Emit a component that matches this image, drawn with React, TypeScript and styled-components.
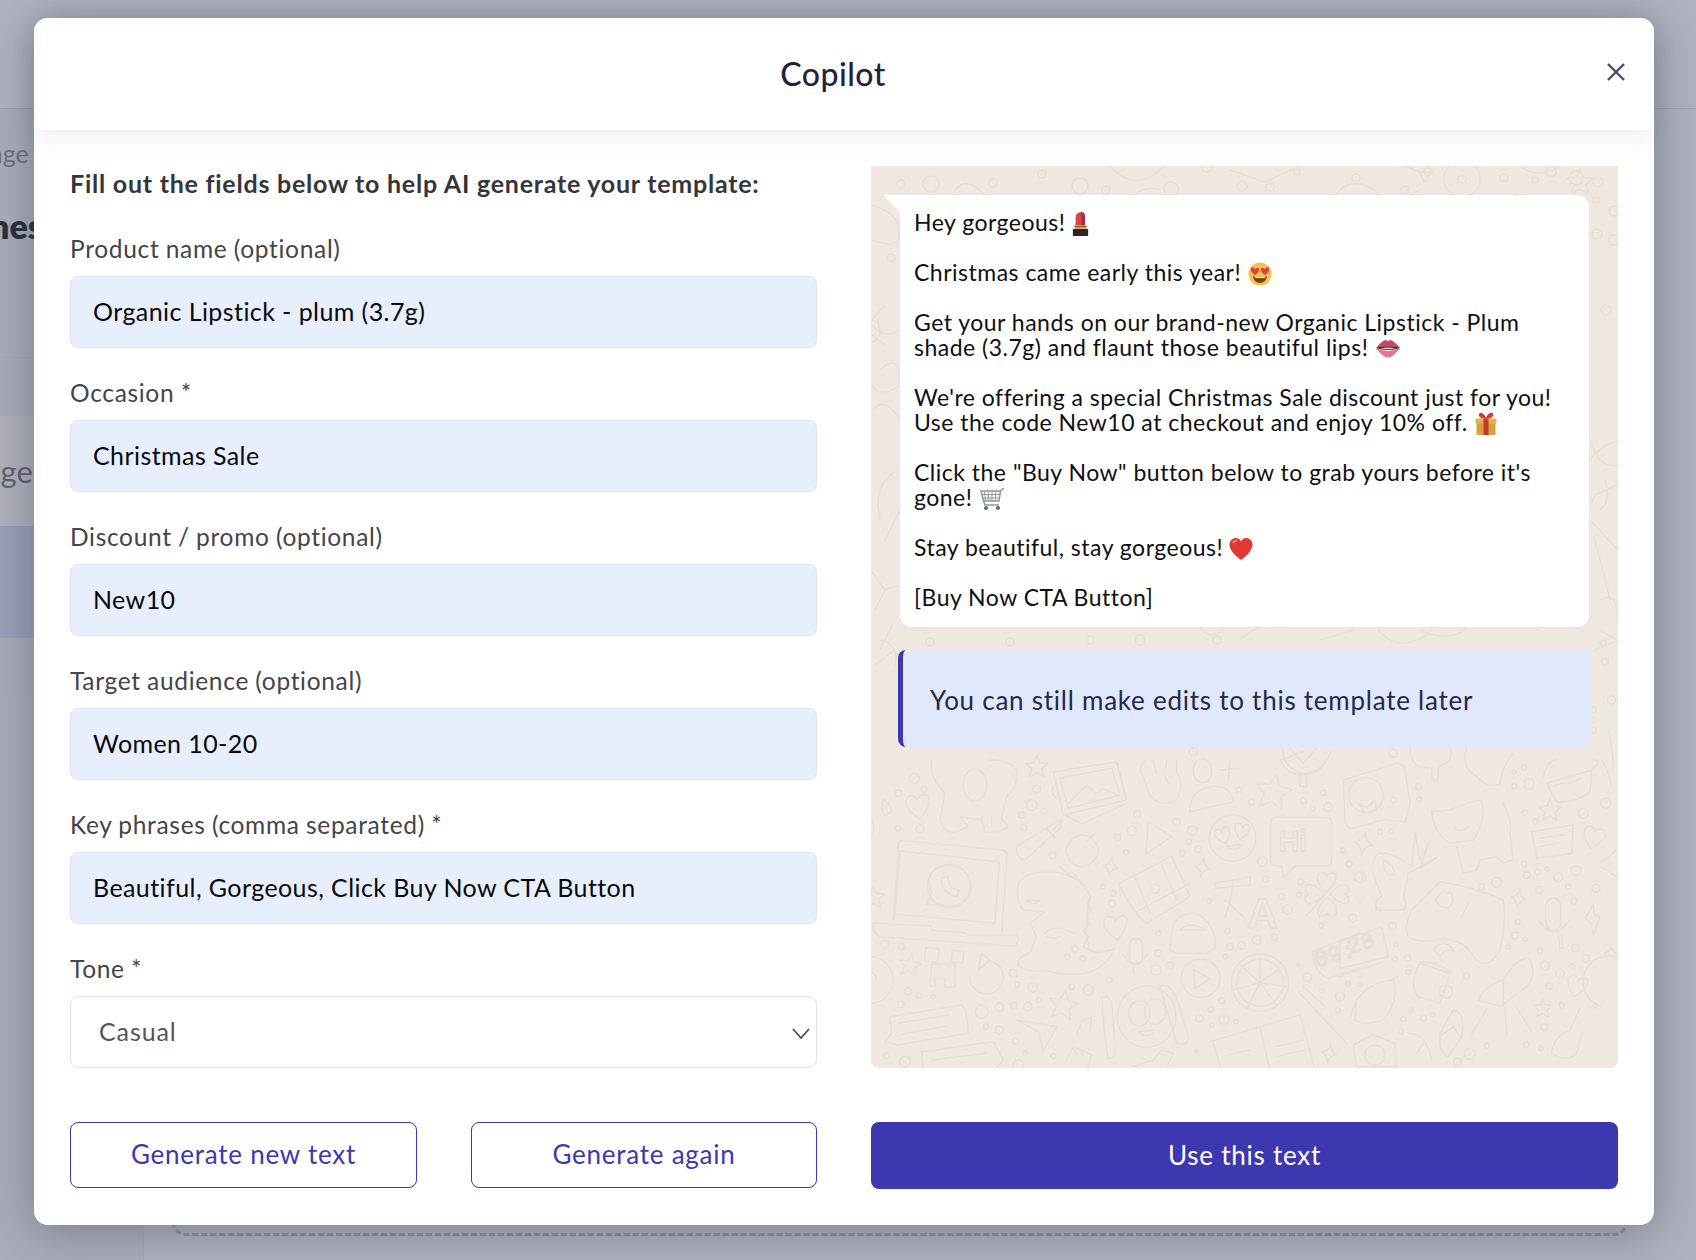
import React from "react";
import styled, { createGlobalStyle } from "styled-components";

const FONT = `Lato, "Noto Sans", Arial, sans-serif`;
const INDIGO = "#3d38b0";

const Global = createGlobalStyle`
  html, body { margin: 0; padding: 0; background: #adb2be; }
  * { box-sizing: border-box; }
  body { font-family: ${FONT}; }
`;

const Page = styled.div`
  position: relative; width: 1696px; height: 1260px; overflow: hidden;
  display: flex; flex-direction: column; background: #adb2be;
`;
const TopBar = styled.div`height: 109px; flex: none; background: #aeb3bf; border-bottom: 1px solid #9fa3ae;`;
const PageBody = styled.div`flex: 1; display: flex; min-height: 0;`;
const Side = styled.div`
  width: 144px; flex: none; display: flex; flex-direction: column; overflow: hidden;
  background: #a9adb9; border-right: 1px solid #a4a8b4;
`;
const SideCrumb = styled.div`
  height: 92px; padding-top: 28px; margin-left: -59px; white-space: nowrap;
  font-size: 25px; color: #6d717c; line-height: 32px;
`;
const SideTitle = styled.div`
  height: 157px; padding-top: 3px; margin-left: -10px; white-space: nowrap;
  font-size: 34px; font-weight: 800; color: #2b3040; line-height: 44px;
  border-bottom: 1px solid #a0a4af;
`;
const SideRow = styled.div<{ $tone: string }>`
  height: ${p => (p.$tone === "active" ? 112 : p.$tone === "item" ? 110 : 58)}px;
  flex: none; margin-left: ${p => (p.$tone === "item" ? -33 : 0)}px;
  background: ${p => (p.$tone === "active" ? "#9a9fb9" : p.$tone === "item" ? "#aeb1bc" : "#a8abb7")};
  display: flex; align-items: center; font-size: 31px; color: #5f6370;
`;
const Content = styled.div`flex: 1; display: flex; flex-direction: column; justify-content: flex-end; padding: 0 68px 24px 28px;`;
const Dashed = styled.div`height: 200px; border: 3px dashed #8d919c; border-radius: 14px;`;

const Modal = styled.div`
  position: absolute; left: 34px; top: 18px; width: 1620px; height: 1207px;
  background: #fff; border-radius: 14px; display: flex; flex-direction: column;
  box-shadow: 0 6px 44px rgba(40, 44, 60, .38);
`;
const Header = styled.header`
  position: relative; height: 112px; flex: none; background: #fff; border-radius: 14px 14px 0 0;
  display: flex; align-items: center; justify-content: center;
  box-shadow: 0 4px 26px rgba(30, 30, 60, .09);
`;
const Title = styled.h1`
  margin: 0; font-size: 32px; font-weight: 500; color: #22223f; letter-spacing: .5px;
  position: relative; left: -11px; top: -1px;
`;
const Close = styled.button`
  position: absolute; right: 26px; top: 42px; width: 24px; height: 24px; padding: 0;
  border: 0; background: none; color: #4a4a63; display: flex; align-items: center; justify-content: center;
`;
const Body = styled.div`
  flex: 1; display: grid; grid-template-columns: 747px 747px; column-gap: 54px; row-gap: 54px;
  grid-template-rows: 902px 67px; padding: 36px;
`;
const Form = styled.form`display: flex; flex-direction: column; margin: 0;`;
const Heading = styled.h2`
  margin: 0 0 32px; font-size: 25px; line-height: 34px; height: 36px; font-weight: 700; color: #35353c; letter-spacing: .76px; white-space: nowrap;
`;
const Field = styled.div`display: flex; flex-direction: column; margin-bottom: 30px; position: relative; &:last-child { margin-bottom: 0; }`;
const Label = styled.label`
  height: 30px; line-height: 30px; margin-bottom: 12px; font-size: 24.5px; color: #44444c; letter-spacing: .68px; word-spacing: -.6px; white-space: nowrap;
`;
const Input = styled.input`
  height: 72px; width: 100%; padding: 0 22px 2px; font: 400 25px ${FONT}; color: #08080f; letter-spacing: .42px;
  background: #e8effc; border: 1px solid #dee4ef; border-radius: 8px; outline: none;
`;
const Select = styled.select`
  height: 72px; width: 100%; padding: 0 28px 2px; font: 400 25px ${FONT}; color: #55555c; letter-spacing: .9px;
  background: #fff; border: 1px solid #e2e2e4; border-radius: 8px; outline: none; appearance: none;
`;
const Chevron = styled.svg`position: absolute; right: 6px; bottom: 27px; width: 20px; height: 14px;`;

const Wallpaper = styled.section`
  position: relative; overflow: hidden; height: 902px; background: #eee8df; border-radius: 0 0 8px 8px;
  padding: 29px 29px 0; display: flex; flex-direction: column;
`;
const Doodles = styled.svg`position: absolute; left: 0; top: 0; width: 747px; height: 902px;`;
const Bubble = styled.div`
  position: relative; background: #fff; border-radius: 0 12px 12px 12px; padding: 15px 15px 17px 14px;
  font-size: 23px; line-height: 25px; color: #0f0f12; letter-spacing: .49px; white-space: nowrap; height: 432px;
  &::before {
    content: ""; position: absolute; left: -17px; top: 0; width: 0; height: 0;
    border-top: 17px solid #fff; border-left: 17px solid transparent;
  }
`;
const Para = styled.p`margin: 0 0 25px; &:last-child { margin: 0; }`;
const Emoji = styled.svg<{ $w?: number }>`
  width: ${p => p.$w ?? 24}px; height: 24px; vertical-align: 1px; margin: -6px 0 -6px 0;
`;
const Notice = styled.div`
  position: relative; margin: 23px -3px 0 -2px; height: 97px; display: flex; align-items: center;
  padding: 2px 0 0 27px; background: #e0e9fb; border-left: 5px solid ${INDIGO}; border-radius: 8px;
  font-size: 26px; color: #28284a; letter-spacing: .75px; white-space: nowrap;
`;
const ButtonPair = styled.div`display: grid; grid-template-columns: 347px 346px; column-gap: 54px;`;
const Outline = styled.button`
  height: 66px; background: #fff; border: 1.5px solid ${INDIGO}; border-radius: 8px; color: ${INDIGO};
  font: 400 26px ${FONT}; letter-spacing: .75px; padding: 0 0 2px;
`;
const Primary = styled.button`
  height: 67px; background: ${INDIGO}; border: 0; border-radius: 8px; color: #fff;
  font: 400 26px ${FONT}; letter-spacing: .75px; padding: 0 0 2px;
`;

/* Wallpaper helpers ------------------------------------------------------ */
const HEART = "M0 9C-14-3-8-11-3-9-1-8 0-6 0-5 0-6 2-9 5-9 9-10 13-3 0 9Z";
const STAR = "M0-11 3-4 11-3 5 2 7 10 0 6-7 10-5 2-11-3-3-4Z";
const SPARK = "M0-11Q1-2 9 0 1 2 0 11-1 2-9 0-1-2 0-11Z";
type S = [number, number, number?, number?];
const Shape = ({ d, v }: { d: string; v: S }) => (
  <path d={d} transform={`translate(${v[0]} ${v[1]}) rotate(${v[3] ?? 0}) scale(${v[2] ?? 3})`} vectorEffect="non-scaling-stroke" strokeWidth="1.5" />
);
const Heart = ({ v }: { v: S }) => <Shape d={HEART} v={v} />;
const Star = ({ v }: { v: S }) => <Shape d={STAR} v={v} />;
const Spark = ({ v }: { v: S }) => <Shape d={SPARK} v={v} />;
const dots = (list: number[][]) => list.map(([x, y, r], i) => <circle key={i} cx={x} cy={y} r={r} />);
const paths = (list: string[]) => list.map((d, i) => <path key={i} d={d} />);

const G1 = () => (
  <g transform="translate(-11 594) scale(.3333)" strokeWidth="4.5">
    {paths([
      "M100 480L115 255Q118 240 132 242L428 270Q442 272 441 288L425 515M120 272L418 305 405 490 105 462Z",
      "M40 490L210 498 215 510 315 518 320 525 470 525Q482 540 465 558L60 530Q35 515 40 490Z",
      "M198 435L215 400Q195 350 225 330 265 300 310 330 345 365 325 410 285 455 240 432Z",
      "M245 355Q240 395 290 410L298 392 278 385 268 370 262 350Z",
      "M215 0Q205 50 255 100L240 180Q255 225 290 215L325 200 300 170 365 180 375 215Q420 220 445 200L425 175 440 110Q480 70 470 30Q450 0 390 0M395 170V195",
      "M580 35L770 5 800 120 610 165ZM600 55L755 25 780 105 625 145ZM625 130L680 75 710 100 730 85 775 105M615 165L665 192 800 130M580 80Q570 100 590 115",
      "M855 0Q830 30 850 50L870 105Q900 145 950 120 975 70 950 40V0M880 0L890 40M920 0L915 40Q915 60 930 70",
      "M990 155Q990 90 1050 80 1110 70 1122 125ZM1110 0L1105 60M1080 30L1140 25",
      "M1262 0Q1280 45 1330 45 1390 40 1395 0M1320 45V80H1340V45",
      "M470 260L590 185 605 180 600 205 495 300Q465 295 470 260ZM560 205L585 235M600 185L580 210",
      "M660 225Q620 240 618 275 630 320 665 320 715 310 715 265 700 225 660 225ZM680 245Q690 230 705 220",
      "M865 185L935 230 858 283Z",
      "M1100 258Q1125 280 1148 255Z",
      "M1250 172H1400Q1415 172 1415 190V300Q1415 318 1400 318H1305L1270 352 1265 318H1250Q1232 318 1232 300V190Q1232 172 1250 172Z",
      "M585 335Q500 330 475 370 465 420 490 450L555 455 510 490 530 530 510 580Q470 590 475 615 500 640 560 630 600 650 680 640 740 620 765 565 720 585 690 570 670 530 690 410 670 350 585 335Z",
      "M600 320L620 340H640L660 360 675 380 692 410 680 430 695 450 680 470 690 490 670 510 685 530 670 560 710 580 750 570",
      "M497 420Q520 440 540 422ZM555 520Q590 490 640 520M560 530Q580 540 600 530",
      "M775 372L935 288 990 410 860 490Q835 480 775 372ZM820 340L870 460M905 315L950 420M830 455L990 370",
      "M935 520Q940 465 995 460 1040 460 1065 530V565L1040 580H950L930 570ZM960 510Q990 480 1035 510Z",
      "M1065 370L1170 350V375L1065 385ZM1120 360Q1115 420 1095 470M1095 420L1150 470",
      "M1340 465L1400 400",
      "M790 585Q825 640 860 585M820 620V640",
      "M1355 575L1500 520M1358 580Q1365 640 1405 655L1500 625",
      "M1000 630L1050 655 1005 685Z",
      "M1200 668V590M1200 668L1265 620M1200 668L1280 680M1200 668L1250 735M1200 668L1160 745M1200 668L1120 690M1200 668L1140 615",
      "M725 715Q745 700 755 730L765 860Q770 900 745 895 735 850 725 715ZM900 680Q930 660 955 730L985 830Q985 860 950 850 930 780 900 680Z",
      "M90 770L305 735Q320 740 325 820L110 855 75 845 95 820ZM115 790L265 765M125 822L262 798",
      "M185 875L400 845 430 900 405 930H190ZM215 900L380 880",
      "M470 780L590 800 550 875 535 815Z",
      "M650 825L665 785 695 770 690 815",
      "M1050 845L1320 765 1365 930M1200 805L1230 930M1060 850L1085 930M1105 885L1170 870M1250 860L1330 840M1250 890L1335 870",
      "M1315 695L1460 850M1330 680L1390 735",
      "M330 650A50 50 0 1 0 385 602M355 630L365 580 390 600Z",
      "M30 590A70 70 0 0 1 30 730M0 640A30 30 0 0 1 50 660",
      "M620 900L640 860 695 885 680 930M640 865L650 880M660 870L668 885",
      "M820 920L880 900 905 870 940 880 920 920",
      "M35 180Q50 210 35 225M70 115Q60 170 80 165 110 155 70 115Z",
    ])}
    <rect x="195" y="565" width="40" height="40" transform="rotate(6 215 585)" />
    <rect x="275" y="572" width="35" height="35" transform="rotate(6 292 590)" />
    <path d="M215 612H285V680H255V655H225V678H210Z" />
    <rect x="808" y="535" width="40" height="78" rx="20" />
    <ellipse cx="345" cy="75" rx="35" ry="48" />
    <ellipse cx="1027" cy="32" rx="28" ry="36" />
    <ellipse cx="860" cy="770" rx="88" ry="92" />
    <ellipse cx="838" cy="760" rx="32" ry="38" />
    <ellipse cx="885" cy="755" rx="32" ry="38" />
    <path d="M835 815Q860 840 885 810Z" />
    <circle cx="267" cy="378" r="65" />
    <circle cx="1118" cy="234" r="70" />
    <circle cx="1022" cy="655" r="58" />
    <circle cx="1200" cy="668" r="86" />
    <circle cx="1200" cy="668" r="70" />
    <circle cx="885" cy="385" r="14" />
    <text x="1256" y="272" fontSize="86" fontWeight="700" fontFamily="Liberation Sans" fill="none">Hi</text>
    <text x="1160" y="505" fontSize="130" fontWeight="700" fontFamily="Liberation Sans" fill="none">A</text>
    <text x="1370" y="622" fontSize="70" fontFamily="Liberation Mono" fill="none" transform="rotate(-16 1370 622)">09:</text>
    <Heart v={[175, 142, 4, -8]} /><Heart v={[768, 505, 4, -6]} /><Heart v={[1090, 228, 2.6, -20]} /><Heart v={[1145, 215, 2.6, 10]} />
    <Heart v={[1400, 368, 3.2]} /><Heart v={[1438, 402, 3.2, 90]} /><Heart v={[1402, 440, 3.2, 180]} /><Heart v={[1365, 402, 3.2, -90]} />
    <Star v={[530, 20, 3]} /><Star v={[1240, 95, 5, 10]} /><Star v={[150, 615, 3, 10]} /><Star v={[610, 735, 4, 10]} /><Star v={[40, 412, 3]} />
    <Spark v={[752, 320, 2.6, 10]} /><Spark v={[1027, 322, 2.6, 10]} /><Spark v={[1407, 880, 2.6, 10]} />
    {dots([[162,55,15],[115,100,10],[192,88,9],[515,135,16],[485,165,9],[552,155,9],[530,88,12],[490,203,9],[114,205,8],[180,207,12],[578,285,10],[773,232,10],[815,213,14],[832,163,10],[950,186,11],[997,212,15],[987,244,8],[1015,268,10],[967,280,9],[798,278,7],[1207,305,14],[1137,90,8],[1175,126,9],[1330,122,9],[1358,145,7],[1405,142,13],[1390,98,8],[730,380,7],[760,400,8],[757,430,10],[1047,423,7],[1217,357,9],[1265,410,9],[1317,405,8],[1283,448,14],[1322,365,9],[1103,513,8],[1110,560,10],[1145,556,11],[1190,540,13],[1244,532,9],[1096,590,7],[895,520,7],[895,580,10],[888,630,16],[930,617,11],[460,640,12],[472,673,7],[518,682,14],[635,680,8],[685,690,15],[622,590,8],[668,596,8],[645,567,9],[748,660,8],[144,694,11],[177,707,8],[220,710,6],[122,733,10],[365,755,20],[418,742,13],[462,737,10],[503,740,13],[537,720,7],[378,800,8],[418,810,12],[1018,775,11],[1052,748,8],[1092,778,15],[1128,785,6],[1085,722,8],[1055,795,6],[75,552,12],[125,560,9],[467,843,9],[497,880,6],[580,888,7],[1009,872,5],[1440,710,13],[1433,750,7],[1385,692,6],[1342,652,13],[1314,617,5],[1384,497,7],[1465,672,7],[1467,312,9],[1450,270,7],[1495,350,14],[80,887,8],[135,905,16],[475,915,15]])}
  </g>
);

const G2 = () => (
  <g transform="translate(469 594) scale(.3333)" strokeWidth="4.5">
    {paths([
      "M10 60L170 10Q190 10 195 30L210 130 195 185 130 180 40 205Q20 205 15 185ZM55 130Q80 155 105 120L110 150 75 160Z",
      "M275 155L330 150 395 125 425 120Q440 180 400 240L330 250Q280 220 275 155ZM350 260L370 340 410 330 420 300 470 290 490 310 520 300 510 220Q515 170 490 130M345 205Q365 220 385 200",
      "M650 125L620 70 755 30 750 95Q710 130 650 125ZM610 50Q620 0 650 0M755 30Q790 0 760 0M640 80L665 70 690 70 720 55",
      "M575 215L700 195 695 280 590 295ZM600 235L670 225M600 260L655 250",
      "M115 280Q90 300 105 360L125 410Q100 420 110 450H190Q205 430 190 415L205 340 295 290 240 325 270 240 240 300 225 220 215 320 170 290 140 280ZM130 300Q130 350 160 345 170 320 130 300Z",
      "M215 450L300 365Q400 380 490 420 500 480 480 570 440 640 400 590 370 530 290 540 240 550 205 530 190 500 215 450ZM305 395L335 400 340 425 325 445 300 440 285 420ZM365 470L385 430M280 570Q310 530 345 575 320 560 300 590Z",
      "M595 480Q640 550 690 480M655 525L660 565H668L665 525",
      "M760 435L735 475 755 490 760 525 780 470 762 462Z",
      "M0 545L125 500 145 590 0 625ZM0 650L128 605",
      "M240 610L330 640 300 730 235 710Q205 670 240 610ZM240 605Q280 600 330 635",
      "M415 720Q430 680 490 660 530 590 570 595 590 650 560 680L480 740ZM490 660V740M440 745L395 825M495 745L500 825M525 735L575 815",
      "M50 720Q90 665 160 660 180 720 130 780 70 800 45 780ZM30 770L50 720M150 660L175 650",
      "M340 750Q380 760 365 830L325 890Q295 880 300 820ZM305 825L340 800 360 830M205 820Q260 820 275 900M230 880L250 850",
      "M720 745L690 810Q640 830 635 880 680 910 710 880L725 820",
      "M40 855L100 825 165 850 170 920H50Z",
      "M785 740A60 60 0 0 1 830 590M795 580L812 565 830 580",
      "M780 310L830 270M780 320L830 350",
    ])}
    <rect x="618" y="415" width="44" height="95" rx="22" />
    <circle cx="78" cy="105" r="52" />
    <circle cx="318" cy="695" r="20" />
    <circle cx="105" cy="885" r="30" />
    <text x="28" y="582" fontSize="70" fontFamily="Liberation Mono" fill="none" transform="rotate(-16 28 582)">28</text>
    <Heart v={[760, 235, 3.6, 14]} /><Heart v={[710, 680, 3.4, 14]} /><Star v={[630, 150, 3]} /><Star v={[608, 745, 2.6]} />
    <Spark v={[70, 250, 3.2, 10]} /><Spark v={[535, 415, 2.6, 10]} />
    {dots([[568,72,16],[552,22,8],[522,35,6],[522,78,8],[730,160,15],[555,157,8],[586,184,7],[797,130,15],[552,312,8],[560,345,10],[592,336,8],[622,328,6],[655,352,13],[708,332,15],[685,380,7],[768,385,12],[598,390,11],[702,424,9],[62,352,16],[60,426,6],[28,312,8],[10,272,7],[120,215,7],[155,215,7],[424,380,9],[470,367,15],[533,485,7],[525,527,10],[556,537,6],[505,560,6],[600,573,8],[707,564,12],[738,596,11],[660,640,13],[696,618,7],[615,617,13],[628,678,10],[765,738,6],[665,736,8],[613,802,11],[559,854,8],[602,864,7],[441,857,7],[389,882,16],[353,905,11],[38,474,12],[158,498,11],[168,553,6],[165,598,7],[203,595,9],[205,637,7],[380,648,9],[22,670,6],[60,672,7],[214,750,6],[250,773,9],[278,765,6],[190,778,7],[183,815,7],[238,118,7],[235,80,9]])}
  </g>
);

const G3 = () => (
  <g transform="translate(309 454) scale(.3333)" strokeWidth="4.5">
    {paths([
      "M310 380Q300 440 370 462 440 450 450 395M360 465V498H380V465M330 385L370 430 410 385M300 420L370 395",
      "M690 385Q690 430 720 440L755 445V480H775V445L810 420 815 385",
      "M860 385Q840 440 890 470 930 510 960 490 970 430 1000 400",
      "M1265 420Q1290 460 1295 500M1285 330Q1300 400 1300 440",
      "M60 25Q90 60 130 30M180 60Q250 0 300 20M420 60L520 30M720 30Q800 70 860 25M1070 30Q1130 -10 1200 25M590 20Q620 70 680 70 750 50 760 20",
      "M1260 30L1310 60",
    ])}
    {dots([[40,395,12],[640,400,12],[640,540,8],[1275,125,10],[1240,270,9],[1240,330,9],[1270,70,9],[1295,240,12]])}
  </g>
);

const G4 = () => (
  <g transform="translate(-871 -166)" strokeWidth="1.5">
    {paths([
      "M953 195Q962 172 985 195M1135 195Q1145 185 1160 190M1230 170L1265 182 1300 166M1110 166Q1135 195 1165 166",
      "M1335 195Q1355 172 1380 195M1410 195L1420 190M1405 166L1420 172H1430Q1425 190 1420 172M1520 166Q1540 180 1560 166",
      "M872 205Q905 215 898 240M872 240Q900 250 900 235M872 325Q885 340 900 330M885 305L872 320M870 345L880 335 878 320",
      "M872 335L885 345M880 370Q900 350 900 385 880 400 872 385M873 410Q885 395 900 420M900 470Q872 480 880 520M900 510L885 540",
      "M872 572L885 590 875 610M885 590L900 585M892 625L880 650",
      "M1590 440Q1600 470 1618 465M1590 460Q1602 445 1618 440M1618 485L1595 495 1590 505M1605 480Q1612 500 1600 510",
      "M1590 520L1618 550M1595 540L1610 600M1600 600Q1618 590 1618 620M1618 640L1595 650",
      "M895 650L875 665M880 640Q900 645 895 665",
    ])}
    {dots([[901,184,4],[931,184,8],[993,183,4],[1042,174,4],[1080,186,8],[1106,190,4],[1171,189,7],[1207,166,6],[1242,186,5],[1270,187,4],[1297,172,3],[1356,178,4],[1405,190,4],[1428,172,4],[1504,178,4],[1517,198,4],[1535,180,3],[1551,172,5],[1576,178,7],[1598,182,5],[1596,200,3],[1614,211,5],[1597,234,5],[1614,240,5],[1606,310,5],[891,258,4],[1580,690,4],[930,642,4],[1010,642,4],[1090,640,4],[1140,640,5],[1217,640,4]])}
    <circle cx="1462" cy="179" r="18" />
    <circle cx="1462" cy="179" r="4" />
    <Star v={[1580, 182, 1.2]} />
  </g>
);

/* Colour emoji ------------------------------------------------------------ */
const LipstickEmoji = () => (
  <Emoji viewBox="5 0 14 22" $w={17}>
    <path d="M7.5 12.5V5Q7.5 2 10 .8L13 0Q16 .5 16 4V12.5Z" fill="#d8434c" />
    <path d="M13 0Q15.5 .5 16 4V12.5H13Z" fill="#a82a35" />
    <rect x="6.5" y="12" width="11" height="3.5" fill="#d7a94b" />
    <rect x="5" y="15.5" width="14" height="6.5" rx=".6" fill="#2b2624" />
    <rect x="6.5" y="13" width="11" height=".8" fill="#6d4d1c" />
  </Emoji>
);
const HeartEyes = () => (
  <Emoji viewBox="0 0 24 24">
    <circle cx="12" cy="12" r="11.5" fill="#f6c24e" />
    <path d="M5 14Q12 16 19 14 18 21 12 21 6 21 5 14Z" fill="#7a4219" />
    <path d="M6.5 14.6Q12 16 17.5 14.6L17 16H7Z" fill="#fff" />
    <path d="M7 13C1 9 2.500 4.500 5.500 5.500 6.500 5.800 7 7 7.200 7.500 8 6 9.800 5 11 6.500 12 9 9 11.500 7 13Z" fill="#e03c46" />
    <path d="M17 13C23 9 21.500 4.500 18.500 5.500 17.500 5.800 17 7 16.800 7.500 16 6 14.200 5 13 6.500 12 9 15 11.500 17 13Z" fill="#e03c46" />
  </Emoji>
);
const LipsEmoji = () => (
  <Emoji viewBox="0 0 26 24" $w={26}>
    <path d="M1 11Q8 3 10.500 3 12 3 13 4.500 14 3 15.500 3 18 3 25 11Z" fill="#c7485f" />
    <path d="M1 11Q13 17 25 11 18 20.500 13 20.500 8 20.500 1 11Z" fill="#e6758c" />
    <path d="M1 11Q13 8.500 25 11 13 15 1 11Z" fill="#1f1a1c" />
    <path d="M5 11Q13 10 21 11 13 13.500 5 11Z" fill="#dfe1e2" />
  </Emoji>
);
const GiftEmoji = () => (
  <Emoji viewBox="0 0 24 24">
    <rect x="2.500" y="9" width="19" height="14" rx="1" fill="#d6a03c" />
    <rect x="1.500" y="6.500" width="21" height="5" rx="1" fill="#e3b349" />
    <rect x="9.500" y="6.500" width="5" height="16.500" fill="#c8362f" />
    <path d="M12 6.500C8 7 4 5 5 2 6-.5 10 1 12 5.500 14 1 18-.5 19 2 20 5 16 7 12 6.500Z" fill="#d33d35" />
  </Emoji>
);
const CartEmoji = () => (
  <Emoji viewBox="0 0 26 24" $w={26}>
    <g stroke="#8f969c" strokeWidth="1" fill="none">
      <path d="M25 1L21.500 4H2L4.500 14H20L21.500 4M4.500 14L6 18H20" strokeWidth="1.500" />
      <path d="M5 4L7 14M9 4L10 14M13 4V14M17 4L16 14M3 7.500H21M3.500 11H20.500" />
    </g>
    <circle cx="7" cy="21" r="2" fill="#5d6468" /><circle cx="19" cy="21" r="2" fill="#5d6468" />
  </Emoji>
);
const HeartEmoji = () => (
  <Emoji viewBox="0 0 24 24">
    <path d="M12 23C4 17 .5 12 .5 7.500 .5 3.500 3.500 1 7 1 9.300 1 11 2.500 12 4.500 13 2.500 14.700 1 17 1 20.500 1 23.500 3.500 23.500 7.500 23.500 12 20 17 12 23Z" fill="#df3b32" />
    <path d="M4 6Q5 3.500 8 3.500" stroke="#f3938b" strokeWidth="1.500" fill="none" />
  </Emoji>
);

const FIELDS = [
  ["Product name (optional)", "Organic Lipstick - plum (3.7g)"],
  ["Occasion *", "Christmas Sale"],
  ["Discount / promo (optional)", "New10"],
  ["Target audience (optional)", "Women 10-20"],
  ["Key phrases (comma separated) *", "Beautiful, Gorgeous, Click Buy Now CTA Button"],
];

export default function App() {
  return (
    <Page>
      <Global />
      <TopBar />
      <PageBody>
        <Side>
          <SideCrumb>Manage templates</SideCrumb>
          <SideTitle>nes</SideTitle>
          <SideRow $tone="plain" />
          <SideRow $tone="item">Page</SideRow>
          <SideRow $tone="active" />
          <SideRow $tone="plain" />
        </Side>
        <Content><Dashed /></Content>
      </PageBody>

      <Modal>
        <Header>
          <Title>Copilot</Title>
          <Close aria-label="Close">
            <svg width="18" height="18" viewBox="0 0 18 18" fill="none" stroke="currentColor" strokeWidth="2.400">
              <path d="M1 1L17 17M17 1L1 17" />
            </svg>
          </Close>
        </Header>
        <Body>
          <Form>
            <Heading>Fill out the fields below to help AI generate your template:</Heading>
            {FIELDS.map(([label, value]) => (
              <Field key={label}>
                <Label>{label}</Label>
                <Input readOnly value={value} />
              </Field>
            ))}
            <Field>
              <Label>Tone *</Label>
              <Select defaultValue="Casual"><option>Casual</option></Select>
              <Chevron viewBox="0 0 20 14" fill="none" stroke="#4c4c4c" strokeWidth="1.800"><path d="M2 2L10 11 18 2" /></Chevron>
            </Field>
          </Form>
          <Wallpaper>
            <Doodles viewBox="0 0 747 902" fill="none" stroke="#e4dfd5" strokeLinecap="round" strokeLinejoin="round">
              <G1 /><G2 /><G3 /><G4 />
            </Doodles>
            <Bubble>
              <Para>Hey gorgeous! <LipstickEmoji /></Para>
              <Para>Christmas came early this year! <HeartEyes /></Para>
              <Para>Get your hands on our brand-new Organic Lipstick - Plum<br />shade (3.7g) and flaunt those beautiful lips! <LipsEmoji /></Para>
              <Para>We're offering a special Christmas Sale discount just for you!<br />Use the code New10 at checkout and enjoy 10% off. <GiftEmoji /></Para>
              <Para>Click the "Buy Now" button below to grab yours before it's<br />gone! <CartEmoji /></Para>
              <Para>Stay beautiful, stay gorgeous! <HeartEmoji /></Para>
              <Para>[Buy Now CTA Button]</Para>
            </Bubble>
            <Notice>You can still make edits to this template later</Notice>
          </Wallpaper>
          <ButtonPair>
            <Outline type="button">Generate new text</Outline>
            <Outline type="button">Generate again</Outline>
          </ButtonPair>
          <Primary type="button">Use this text</Primary>
        </Body>
      </Modal>
    </Page>
  );
}
